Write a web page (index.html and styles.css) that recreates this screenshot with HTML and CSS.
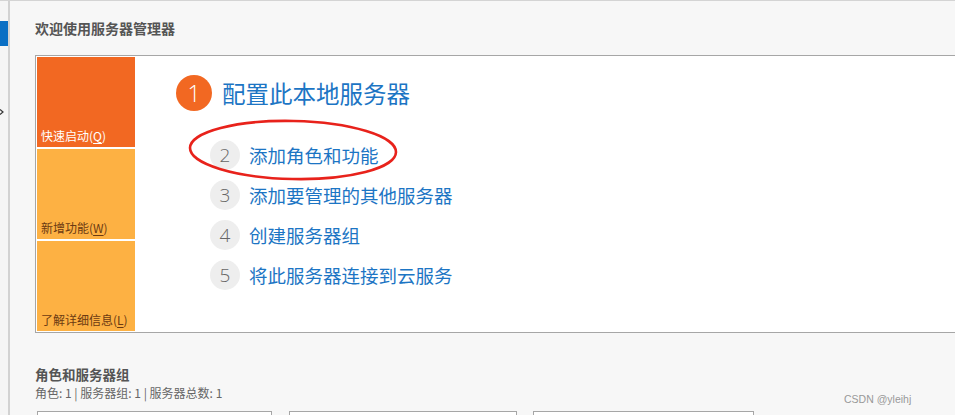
FILE: index.html
```html
<!DOCTYPE html>
<html lang="zh-CN">
<head>
<meta charset="UTF-8">
<meta name="viewport" content="width=device-width, initial-scale=1.0">
<title>服务器管理器</title>
<link rel="stylesheet" href="styles.css">
</head>
<body>
<div class="window">
    <div class="sidebar">
        <div class="nav-active"></div>
        <svg class="nav-arrow" width="4" height="6" viewBox="0 0 4 6">
            <path d="M0 0.5 L3 3 L0 5.5" fill="none" stroke="#333" stroke-width="1.2"/>
        </svg>
    </div>
    <div class="main">
        <h2 class="welcome">欢迎使用服务器管理器</h2>
        <div class="panel">
            <div class="tiles">
                <div class="tile tile-quick">快速启动(<u>Q</u>)</div>
                <div class="tile tile-new">新增功能(<u>W</u>)</div>
                <div class="tile tile-learn">了解详细信息(<u>L</u>)</div>
            </div>
            <div class="steps">
                <div class="step-main">
                    <span class="num num-main">1</span>
                    <span class="step-title">配置此本地服务器</span>
                </div>
                <ul class="step-list">
                    <li><span class="num">2</span><span>添加角色和功能</span></li>
                    <li><span class="num">3</span><span>添加要管理的其他服务器</span></li>
                    <li><span class="num">4</span><span>创建服务器组</span></li>
                    <li><span class="num">5</span><span>将此服务器连接到云服务</span></li>
                </ul>
                <!-- red annotation round step 2 -->
                <svg class="mark" width="220" height="70" viewBox="0 0 220 70">
                    <ellipse cx="110" cy="35" rx="103" ry="29" fill="none" stroke="#e8221b" stroke-width="2.6" transform="rotate(1.2 110 35)"/>
                </svg>
            </div>
        </div>
        <div class="groups">
            <h3>角色和服务器组</h3>
            <p>角色: 1 | 服务器组: 1 | 服务器总数: 1</p>
            <div class="cards">
                <div class="card card-a"></div>
                <div class="card card-b"></div>
                <div class="card card-c"></div>
            </div>
        </div>
        <div class="watermark">CSDN @yleihj</div>
    </div>
</div>
</body>
</html>
```

FILE: styles.css
```css
/* Basic styling */
html, body {
    margin: 0;
    padding: 0;
    height: 100%;
    overflow: hidden;
}
body {
    font-family: "Noto Sans CJK SC", "Noto Sans", sans-serif;
    background-color: #f7f7f7;
    color: #555;
}
.window {
    display: flex;
    height: 415px;
    border-top: 1px solid #d4d4d4;
    box-sizing: border-box;
}
.sidebar {
    width: 8px;
    flex: none;
    background-color: #f5f5f5;
    border-right: 2px solid #d2d2d2;
    position: relative;
}
.nav-active {
    margin-top: 20px;
    height: 25px;
    background-color: #0a6fc4;
}
.nav-arrow {
    position: absolute;
    top: 108px;
    left: 0;
}
.main {
    flex: 1;
    position: relative;
    padding-left: 25px;
    overflow: hidden;
}
.welcome {
    margin: 0;
    padding-top: 17px;
    height: 37px;
    box-sizing: border-box;
    font-size: 14px;
    line-height: 20px;
    font-weight: bold;
    color: #555;
}
.panel {
    display: flex;
    width: 960px;
    margin-top: 17px;
    border: 1px solid #a6a6a6;
    background-color: #fff;
}
.tiles {
    width: 98px;
    padding: 1px;
    display: flex;
    flex-direction: column;
    gap: 2px;
}
.tile {
    height: 90px;
    box-sizing: border-box;
    padding: 0 0 3px 4px;
    display: flex;
    align-items: flex-end;
    font-size: 12px;
    line-height: 16px;
}
.tile u {
    text-decoration: underline;
    text-underline-offset: 2px;
}
.tile-quick {
    background-color: #f26822;
    color: #fff;
}
.tile-new, .tile-learn {
    background-color: #fdb143;
    color: #6b3a12;
}
.steps {
    position: relative;
    padding: 19px 0 0 40px;
}
.step-main {
    display: flex;
    align-items: center;
    height: 36px;
}
.num {
    width: 30px;
    height: 30px;
    border-radius: 50%;
    background-color: #eeeeee;
    color: #666;
    display: flex;
    align-items: center;
    justify-content: center;
    font-family: "Open Sans", "Noto Sans", sans-serif;
    font-weight: 300;
    font-size: 19px;
    flex: none;
}
.num-main {
    width: 36px;
    height: 36px;
    background-color: #f26822;
    color: #fff;
    font-size: 23px;
}
.step-title {
    margin-left: 10px;
    font-size: 23.5px;
    line-height: 30px;
    color: #1c75c4;
}
.step-list {
    list-style-type: none;
    margin: 29px 0 0 34px;
    padding: 0;
    display: flex;
    flex-direction: column;
    gap: 10px;
}
.step-list li {
    display: flex;
    align-items: center;
    height: 30px;
}
.step-list li span:last-child {
    margin-left: 9px;
    font-size: 18.5px;
    color: #1c75c4;
}
.mark {
    position: absolute;
    left: 47px;
    top: 59px;
}
.groups {
    margin-top: 32px;
}
.groups h3 {
    margin: 0;
    font-size: 13.5px;
    line-height: 19px;
    font-weight: bold;
    color: #555;
}
.groups p {
    margin: 0;
    font-size: 12px;
    line-height: 17px;
    color: #666;
}
.cards {
    display: flex;
    margin-top: 10px;
    margin-left: 2px;
}
.card {
    height: 40px;
    border: 1px solid #a6a6a6;
    background-color: #fff;
}
.card-a {
    width: 233px;
}
.card-b {
    width: 226px;
    margin-left: 17px;
}
.card-c {
    width: 219px;
    margin-left: 16px;
}
.watermark {
    position: absolute;
    left: 834px;
    top: 392px;
    font-family: "Liberation Sans", sans-serif;
    font-size: 10.5px;
    color: #999;
}
```
